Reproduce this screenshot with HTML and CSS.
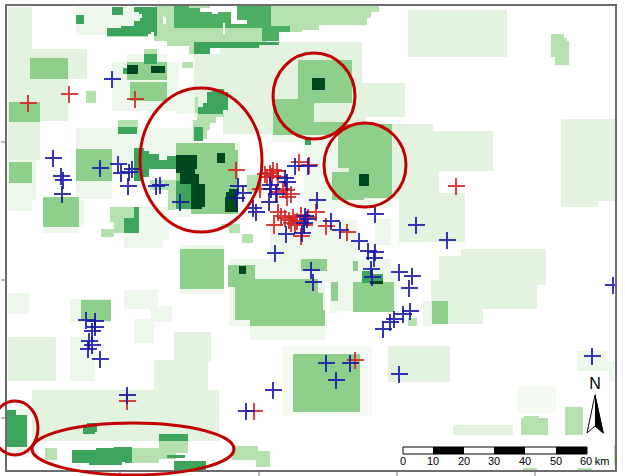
FILE: index.html
```html
<!DOCTYPE html>
<html lang="en">
<head>
<meta charset="utf-8">
<meta name="viewport" content="width=device-width, initial-scale=1">
<title>Survey map</title>
<link rel="stylesheet" href="styles.css">
</head>
<body>
<main>
<svg class="map" viewBox="0 0 625 476" role="img" aria-label="Survey map with density patches, sample points and a 60 km scale bar">
<defs>
<path id="c" d="M-8 0H9M0-8V9"/>
<clipPath id="frame"><path d="M6 5H616V471H6z"/></clipPath>
</defs>
<g clip-path="url(#frame)">
<!-- faintest patches -->
<g class="d1">
<path d="M76 7H140V35H76zM127 54H167V62H179V88H195V114H176V111H112V62H127zM76 128H195V165H112V199H76zM8 157H40V145H36V200H32V211H8z"/>
<path d="M124 207H169V240H163V248H124zM43 227H84V200H78V233H43zM124 290H158V306H172V322H150V309H124zM134 319H154V343H134zM8 293H29V314H8zM70 299H111V322H70zM70 337H95V381H70z"/>
<path d="M270 220H357V271H267V259H391V278H338V313H330V282H325V340H250V326H229V267H226V267H229V259H270zM304 142H340V200H392V208H304zM375 219H391V245H375zM272 135H325V142H272zM180 245H224V294H180z"/>
<path d="M338 273H397V311H338zM423 301H440V326H423zM577 351H606V361H614V381H607V371H577zM7 409H29V457H7z"/>
<path d="M176 143H240V214H191V217H176z"/>
</g>
<path class="d0" d="M282 346H372V416H282z"/>
<!-- light patches -->
<g class="d2">
<path d="M8 7H32V49H87V79H68V121H40V160H8V57H8z"/>
<path d="M194 54H220V45H280V42H362V83H405V117H366V124H433V131H493V171H439V193H465V242H399V199H340V135H272V134H223V117H194z"/>
<path d="M408 10H507V57H408zM561 119H615V201H598V207H561zM461 249H546V285H537V309H483V324H431V280H439V256H461z"/>
<path d="M388 346H450V382H388zM8 337H56V381H8zM32 390H154V360H174V332H211V362H208V390H219V441H32zM453 425H513V435H453z"/>
</g>
<path class="blank" d="M439 171H493V193H439z"/>
<path class="d0" d="M517 386H556V413H517z"/>
<!-- medium patches -->
<g class="d3">
<path d="M155 5H174V28H262V12H271V5H379V12H371V18H367V25H319V30H302V32H267V42H194V54H189V46H167V41H154V35H155z"/>
<path d="M189 5H210V8H189zM107 35H148V37H107z"/>
<path d="M86 91H96V103H86zM144 49H157V55H144zM182 62H193V68H182zM118 120H138V128H118zM195 97H198V113H195zM197 114H224V117H216V123H210V130H207V139H193V120H197z"/>
<path d="M110 207H134V218H139V233H114V222H110zM101 229H114V237H101zM150 180H176V210H168V190H150zM221 224H240V233H229V228H221zM242 234H253V243H242zM247 175H262V193H247z"/>
<path d="M551 34H564V38H567V41H569V65H555V57H551zM408 318H417V326H408zM524 416H539V418H548V435H521V418H524zM565 407H583V435H565zM614 445H616V465H614zM523 468H537V471H523zM578 468H592V471H578z"/>
<path d="M45 448H57V460H45zM132 448H159V441H188V453H176V459H159V463H132zM232 446H258V451H270V467H256V460H232z"/>
</g>
<!-- strong patches -->
<g class="d4">
<path d="M30 58H68V79H30zM9 102H40V122H9zM127 62H167V80H127zM130 82H167V101H130zM9 162H32V183H9zM76 149H112V181H76zM43 197H79V227H43zM176 143H235V150H238V214H191V209H176z"/>
<path d="M298 60H352V103H314V122H347V135H273V99H298zM338 124H392V198H364V200H332V172H349V168H338z"/>
<path d="M180 249H224V289H180zM228 265H255V279H318V293H323V310H325V326H250V320H235V287H228zM301 259H327V271H301zM353 261H358V271H353zM331 282H338V301H331zM353 282H394V312H353zM81 300H111V321H81zM432 301H448V324H432zM293 354H360V412H293z"/>
</g>
<!-- dense patches -->
<g class="d5">
<path d="M76 15H84V24H76zM112 7H123V15H112zM144 54H157V64H144zM118 127H137V134H118zM305 139H311V145H305zM123 68H127V65H130V74H123z"/>
<path d="M134 7H157V36H154V32H151V34H148V36H107V28H121V26H134V21H140V18H142V14H139V12H134zM194 42H279V45H259V48H210V54H194zM207 92H212V89H224V92H228V110H223V114H198V107H203V103H207z"/>
<path d="M194 127H203V141H194zM134 148H144V151H149V154H159V160H167V156H176V169H149V177H143V181H134zM176 181H191V209H176zM134 207H139V233H124V218H134z"/>
<path d="M362 271H371V274H383V283H362zM7 410H16V415H27V447H7zM83 425H87V423H97V432H95V434H83zM72 450H96V448H114V447H132V463H125V462H122V465H89V463H72zM159 434H188V441H159zM167 455H185V458H167zM174 461H206V471H174z"/>
</g>
<g class="d6">
<path d="M174 5H189V8H200V12H212V14H218V12H231V24H224V28H174zM237 5H271V26H290V32H279V41H262V28H225V24H247V20H237z"/>
</g>
<path class="blank" d="M163 15L166 18V24H163zM223 23H225V34H223z"/>
<!-- highest density -->
<g class="d7">
<path d="M127 65H138V74H127zM151 66H165V73H151zM312 78H325V90H312zM359 174H369V186H359zM217 153H225V163H217zM239 266H246V274H239zM370 281H383V284H370z"/>
<path d="M176 155H197V169H195V174H199V184H205V207H202V209H191V184H180V173H176zM226 192H229V189H238V212H225V197H226z"/>
</g>
<g class="point red">
<use href="#c" x="28" y="103"/><use href="#c" x="69" y="94"/><use href="#c" x="135" y="99"/><use href="#c" x="236" y="170"/><use href="#c" x="299" y="162"/><use href="#c" x="309" y="165"/><use href="#c" x="456" y="186"/><use href="#c" x="347" y="232"/><use href="#c" x="326" y="226"/><use href="#c" x="316" y="212"/><use href="#c" x="127" y="401"/><use href="#c" x="355" y="360"/><use href="#c" x="254" y="411"/>
<use href="#c" x="265" y="174"/><use href="#c" x="270" y="173"/><use href="#c" x="273" y="170"/><use href="#c" x="277" y="171"/><use href="#c" x="267" y="177"/><use href="#c" x="272" y="176"/><use href="#c" x="260" y="189"/><use href="#c" x="278" y="177"/><use href="#c" x="277" y="192"/><use href="#c" x="283" y="189"/><use href="#c" x="286" y="190"/><use href="#c" x="291" y="194"/><use href="#c" x="287" y="197"/><use href="#c" x="274" y="225"/><use href="#c" x="278" y="212"/><use href="#c" x="281" y="216"/><use href="#c" x="285" y="218"/><use href="#c" x="289" y="220"/><use href="#c" x="293" y="217"/><use href="#c" x="297" y="221"/><use href="#c" x="301" y="215"/><use href="#c" x="295" y="224"/><use href="#c" x="291" y="223"/><use href="#c" x="301" y="236"/><use href="#c" x="304" y="225"/><use href="#c" x="308" y="217"/>
</g>
<g class="point blue">
<use href="#c" x="112" y="79"/><use href="#c" x="53" y="158"/><use href="#c" x="61" y="176"/><use href="#c" x="63" y="180"/><use href="#c" x="62" y="194"/><use href="#c" x="100" y="168"/><use href="#c" x="118" y="164"/><use href="#c" x="132" y="169"/><use href="#c" x="129" y="172"/><use href="#c" x="121" y="173"/><use href="#c" x="128" y="186"/><use href="#c" x="156" y="186"/><use href="#c" x="160" y="185"/><use href="#c" x="180" y="202"/>
<use href="#c" x="238" y="186"/><use href="#c" x="243" y="193"/><use href="#c" x="236" y="198"/><use href="#c" x="253" y="208"/><use href="#c" x="256" y="212"/><use href="#c" x="270" y="185"/><use href="#c" x="271" y="189"/><use href="#c" x="269" y="202"/><use href="#c" x="285" y="178"/><use href="#c" x="287" y="182"/><use href="#c" x="276" y="194"/><use href="#c" x="295" y="166"/><use href="#c" x="308" y="166"/><use href="#c" x="317" y="200"/><use href="#c" x="286" y="234"/><use href="#c" x="302" y="233"/><use href="#c" x="305" y="216"/><use href="#c" x="307" y="219"/><use href="#c" x="304" y="223"/><use href="#c" x="331" y="221"/><use href="#c" x="340" y="230"/>
<use href="#c" x="375" y="214"/><use href="#c" x="416" y="225"/><use href="#c" x="447" y="240"/><use href="#c" x="359" y="241"/><use href="#c" x="275" y="253"/><use href="#c" x="311" y="270"/><use href="#c" x="313" y="282"/><use href="#c" x="368" y="251"/><use href="#c" x="375" y="252"/><use href="#c" x="374" y="258"/><use href="#c" x="371" y="269"/><use href="#c" x="372" y="277"/><use href="#c" x="399" y="272"/><use href="#c" x="412" y="276"/><use href="#c" x="409" y="288"/><use href="#c" x="383" y="329"/><use href="#c" x="390" y="322"/><use href="#c" x="394" y="319"/><use href="#c" x="403" y="314"/><use href="#c" x="410" y="311"/><use href="#c" x="613" y="285"/><use href="#c" x="592" y="356"/>
<use href="#c" x="86" y="320"/><use href="#c" x="95" y="321"/><use href="#c" x="95" y="327"/><use href="#c" x="92" y="331"/><use href="#c" x="89" y="341"/><use href="#c" x="92" y="345"/><use href="#c" x="88" y="349"/><use href="#c" x="100" y="359"/><use href="#c" x="127" y="395"/><use href="#c" x="326" y="363"/><use href="#c" x="336" y="380"/><use href="#c" x="350" y="363"/><use href="#c" x="273" y="390"/><use href="#c" x="246" y="411"/><use href="#c" x="399" y="374"/>
</g>
</g>
<!-- map frame and ticks -->
<path class="border" d="M6 5H616V471H6z"/>
<path class="tick" d="M1 142H6M1 280H6M1 418H6M120 471V476M259 471V476M397 471V476M535 471V476"/>
<!-- north arrow -->
<path class="blank" d="M583 371H609V436H583z"/>
<text class="north" x="595" y="389">N</text>
<path class="arrow" d="M595 395L587 433L595 426L603 433z"/>
<path class="solid" d="M595 393L604 434L595 426z"/>
<!-- scale bar -->
<path class="bar" d="M403 447H587V454H403z"/>
<path class="solid" d="M433 447H464V454H433zM494 447H525V454H494zM556 447H587V454H556z"/>
<g class="scale">
<text x="403" y="465">0</text><text x="433" y="465">10</text><text x="464" y="465">20</text><text x="494" y="465">30</text><text x="525" y="465">40</text><text x="556" y="465">50</text><text x="586" y="465">60</text><text x="602" y="465">km</text>
</g>
<!-- highlighted areas -->
<g class="ring">
<ellipse cx="201" cy="160" rx="61" ry="72"/>
<ellipse cx="314" cy="96" rx="41" ry="43"/>
<ellipse cx="365" cy="165" rx="41" ry="42"/>
<ellipse cx="15" cy="428" rx="23" ry="27"/>
<ellipse cx="133" cy="449" rx="101" ry="26"/>
</g>
</svg>
</main>
</body>
</html>
```
FILE: styles.css
```css
body {
  margin: 0;
  background: #fff;
  font-family: "Liberation Sans", Arial, sans-serif;
}

.map {
  display: block;
  width: 100%;
  height: auto;
}

.blank { fill: #fff; }
.d0 { fill: #f5faf3; }
.d1 { fill: #edf7eb; }
.d2 { fill: #e3f3df; }
.d3 { fill: #b5e1ae; }
.d4 { fill: #8ed08b; }
.d5 { fill: #3ca45b; }
.d6 { fill: #4caf63; }
.d7 { fill: #00491e; }

.point {
  fill: none;
  stroke-width: 2;
  stroke-opacity: 0.85;
}

.red { stroke: #d42020; }
.blue { stroke: #1414a8; }

.border {
  fill: none;
  stroke: #6c6c70;
  stroke-width: 2;
}

.tick {
  stroke: #77777a;
  stroke-width: 1;
}

.ring {
  fill: none;
  stroke: #c00000;
  stroke-width: 3;
}

.solid { fill: #000; }

.arrow,
.bar {
  fill: #fff;
  stroke: #000;
  stroke-width: 1;
}

.north {
  font-size: 16px;
  text-anchor: middle;
}

.scale {
  font-size: 11px;
  text-anchor: middle;
}
```
